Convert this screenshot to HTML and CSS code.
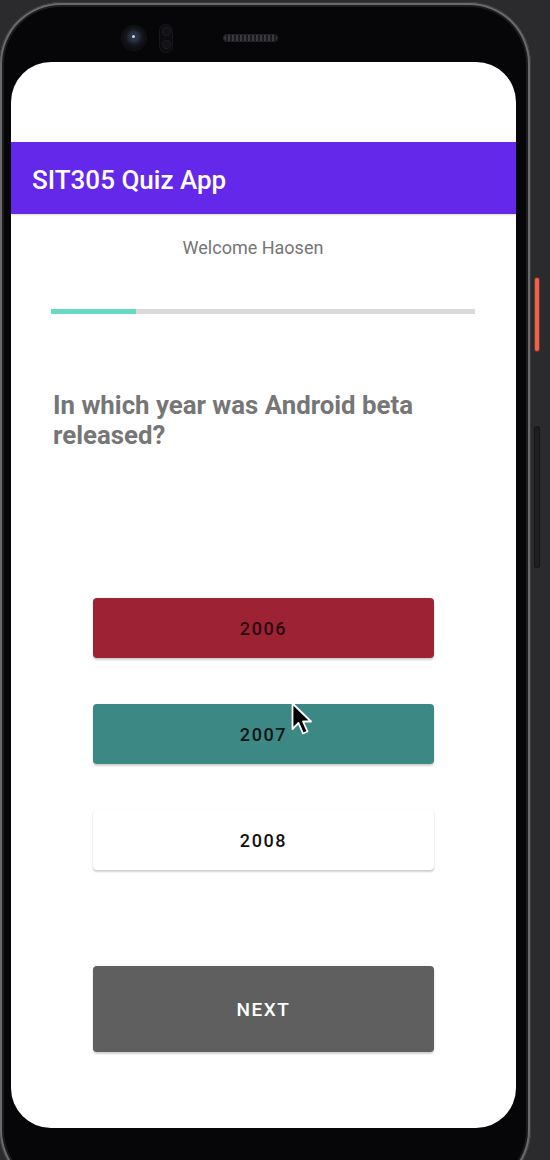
FILE: index.html
```html
<!DOCTYPE html>
<html lang="en">
<head>
<meta charset="utf-8">
<title>SIT305 Quiz App</title>
<link rel="stylesheet" href="styles.css">
</head>
<body>
<div class="phone">
  <div class="bezel">
    <div class="camera"><div class="lens"></div></div>
    <div class="sensor"><span></span><span></span></div>
    <div class="speaker"></div>
  </div>
  <div class="screen">
    <div class="status"></div>
    <div class="appbar"><span class="title">SIT305 Quiz App</span></div>
    <div class="welcome">Welcome Haosen</div>
    <div class="progress"><div class="progress-fill" style="width: 20%"></div></div>
    <div class="question">In which year was Android beta released?</div>
    <div class="answers">
      <button class="btn answer wrong">2006</button>
      <button class="btn answer right">2007</button>
      <button class="btn answer plain">2008</button>
    </div>
    <button class="btn next">NEXT</button>
    <svg class="cursor" width="24" height="36" viewBox="0 0 24 36">
      <path d="M1.5 1.5 L1.5 27 L7.5 21 L12 31.5 L16.5 29.5 L12 19.5 L20 19.5 Z" fill="#000" stroke="#fff" stroke-width="1.8" stroke-linejoin="round"/>
    </svg>
  </div>
</div>
<div class="side">
  <div class="power"></div>
  <div class="volume"></div>
</div>
</body>
</html>
```
FILE: styles.css
```css
html, body {
  margin: 0;
  padding: 0;
}
body {
  width: 550px;
  height: 1160px;
  overflow: hidden;
  background: #2b2b2d;
  display: flex;
  align-items: flex-start;
  font-family: Roboto, "Liberation Sans", sans-serif;
}
.phone {
  flex: none;
  margin: 2px 0 0 -1px;
  width: 532px;
  height: 1190px;
  box-sizing: border-box;
  padding: 0 0 0 12px;
  border-radius: 62px;
  background: #060608;
  box-shadow: inset 0 0 0 1px #3a3a3c, inset 0 0 0 3px #6a6a6c, inset 0 0 0 5px #1c1c1e;
  display: flex;
  flex-direction: column;
}
.bezel {
  height: 60px;
  box-sizing: border-box;
  padding: 12px 0 0 111px;
  display: flex;
  align-items: center;
}
.bezel > * {
  flex: none;
}
.camera {
  width: 24px;
  height: 24px;
  border-radius: 50%;
  background: radial-gradient(circle at 50% 45%, #2a3346 0 22%, #15171d 45%, #0b0b0f 75%);
  box-shadow: 0 0 0 1px #141418;
  display: flex;
  align-items: center;
  justify-content: center;
}
.lens {
  width: 3px;
  height: 3px;
  border-radius: 50%;
  background: #c8d4ee;
  margin: -3px 0 0 -2px;
}
.sensor {
  margin-left: 14px;
  width: 12px;
  height: 27px;
  border-radius: 6px;
  background: #0c0c10;
  box-shadow: 0 0 0 1px #17171b;
  display: flex;
  flex-direction: column;
  align-items: center;
  justify-content: space-around;
}
.sensor span {
  width: 7px;
  height: 7px;
  border-radius: 50%;
  background: #121216;
  box-shadow: 0 0 0 1px #1d1d22;
}
.speaker {
  margin-left: 52px;
  width: 53px;
  height: 6px;
  border-radius: 3px;
  background: repeating-linear-gradient(90deg, #3a3a3e 0 2px, #1a1a1d 2px 4px);
  box-shadow: 0 0 0 1px #222226;
}
.screen {
  position: relative;
  width: 505px;
  height: 1066px;
  background: #ffffff;
  border-radius: 40px;
  overflow: hidden;
  display: flex;
  flex-direction: column;
}
.status {
  height: 80px;
  flex: none;
}
.appbar {
  flex: none;
  height: 72px;
  background: #6328ea;
  display: flex;
  align-items: center;
  padding-left: 21px;
  box-shadow: 0 1px 2px rgba(0,0,0,0.15);
}
.title {
  color: #ffffff;
  font-size: 26px;
  font-weight: 500;
  letter-spacing: 0;
  margin-top: 3px;
}
.welcome {
  margin-top: 24px;
  line-height: 20px;
  font-size: 18px;
  color: #757575;
  text-align: center;
  padding-right: 21px;
}
.progress {
  margin: 51px 41px 0 40px;
  height: 5px;
  background: #dadada;
}
.progress-fill {
  height: 100%;
  background: #66d9c6;
}
.question {
  margin-top: 76px;
  padding: 0 40px 0 42px;
  font-size: 25.8px;
  font-weight: 700;
  line-height: 30px;
  color: #767676;
}
.answers {
  margin-top: 148px;
  display: flex;
  flex-direction: column;
  align-items: center;
  gap: 46px;
}
.btn {
  display: block;
  width: 341px;
  border: none;
  border-radius: 4px;
  font-family: Roboto, "Liberation Sans", sans-serif;
  font-weight: 500;
  letter-spacing: 1.6px;
  box-shadow: 0 2px 2px rgba(0,0,0,0.18), 0 0 1px rgba(0,0,0,0.12);
  padding: 0;
}
.answer {
  height: 60px;
  font-size: 18px;
  color: #111111;
}
.wrong {
  background: #9c2234;
  color: #2a0b10;
}
.right {
  background: #3c8885;
  color: #0b1413;
}
.plain {
  background: #ffffff;
}
.next {
  margin: 96px auto 0;
  height: 86px;
  background: #5f5f5f;
  color: #ffffff;
  font-size: 19px;
  letter-spacing: 1.5px;
}
.cursor {
  position: absolute;
  left: 280px;
  top: 640px;
}
.side {
  flex: none;
  margin-left: 4px;
  display: flex;
  flex-direction: column;
}
.power {
  margin-top: 278px;
  width: 4px;
  height: 73px;
  border-radius: 2px;
  background: #e4664d;
  box-shadow: 0 0 0 1px #7a2f22;
}
.volume {
  margin-top: 76px;
  width: 4px;
  height: 140px;
  border-radius: 2px;
  background: #1f1f21;
  box-shadow: 0 0 0 1px #141416;
}
```
